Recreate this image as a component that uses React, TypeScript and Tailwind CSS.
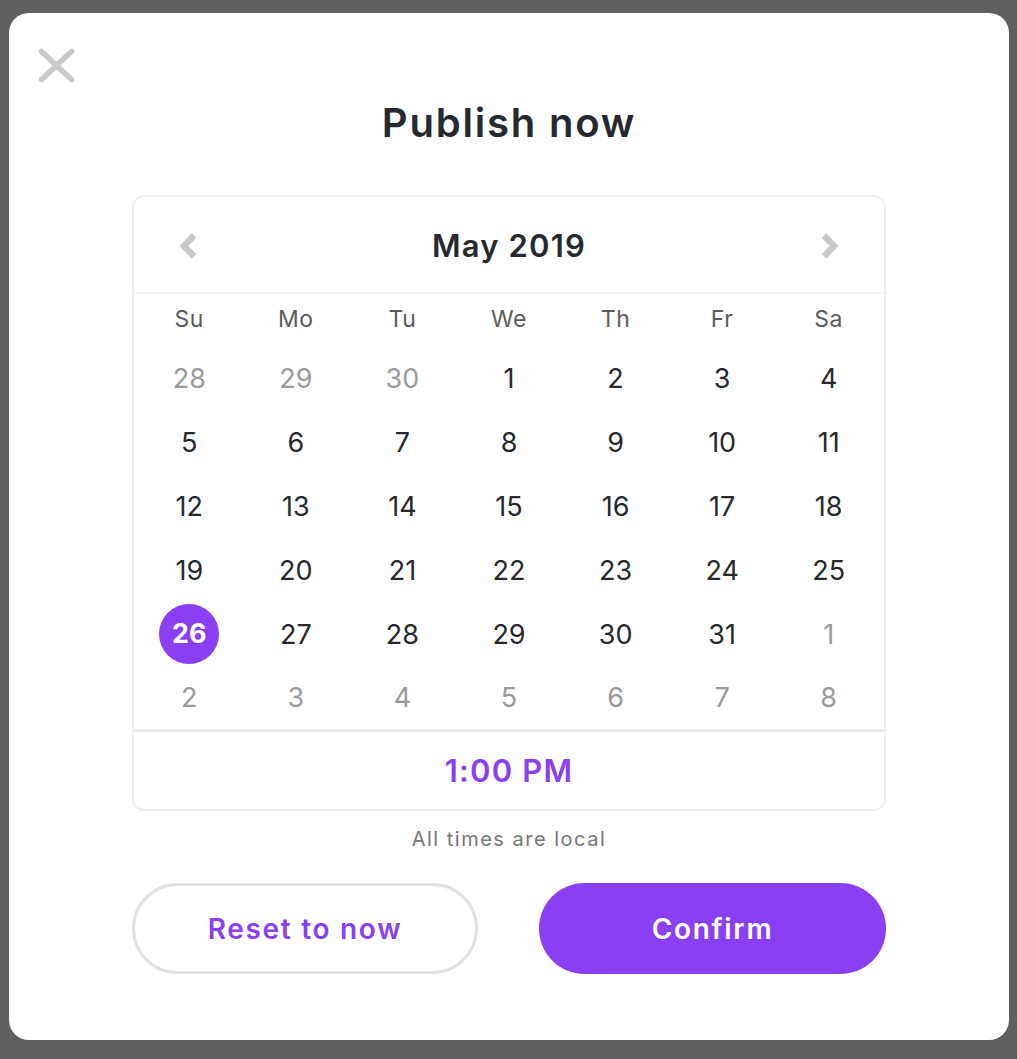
import React from "react";

const FONT = { fontFamily: "Inter, 'Open Sans', sans-serif" };

type Cell = { d: number; muted?: boolean; selected?: boolean };

const rows: Cell[][] = [
  [{ d: 28, muted: true }, { d: 29, muted: true }, { d: 30, muted: true }, { d: 1 }, { d: 2 }, { d: 3 }, { d: 4 }],
  [{ d: 5 }, { d: 6 }, { d: 7 }, { d: 8 }, { d: 9 }, { d: 10 }, { d: 11 }],
  [{ d: 12 }, { d: 13 }, { d: 14 }, { d: 15 }, { d: 16 }, { d: 17 }, { d: 18 }],
  [{ d: 19 }, { d: 20 }, { d: 21 }, { d: 22 }, { d: 23 }, { d: 24 }, { d: 25 }],
  [{ d: 26, selected: true }, { d: 27 }, { d: 28 }, { d: 29 }, { d: 30 }, { d: 31 }, { d: 1, muted: true }],
  [2, 3, 4, 5, 6, 7, 8].map((d) => ({ d, muted: true })),
];

const weekdays = ["Su", "Mo", "Tu", "We", "Th", "Fr", "Sa"];

function Chevron({ dir }: { dir: "left" | "right" }) {
  return (
    <svg width="20" height="26" viewBox="0 0 20 26" fill="none">
      <path
        d={dir === "left" ? "M16 2.5 L6 13 L16 23.5" : "M4 2.5 L14 13 L4 23.5"}
        stroke="#c9c9c9"
        strokeWidth="6.5"
        strokeLinejoin="miter"
      />
    </svg>
  );
}

export default function App() {
  return (
    <div className="w-[1017px] h-[1059px] bg-[#5f5f5f] pt-[13px] pl-[9px]" style={FONT}>
      <div className="relative w-[1000px] h-[1027px] bg-white rounded-[20px] flex flex-col items-center">
        <button className="absolute left-[28px] top-[34px]">
          <svg width="39" height="37" viewBox="0 0 39 37" fill="none">
            <path d="M4.5 4.5 L34.5 32.5 M34.5 4.5 L4.5 32.5" stroke="#c9c9c9" strokeWidth="5.5" strokeLinecap="round" />
          </svg>
        </button>

        <h1 className="mt-[86px] h-[48px] leading-[48px] text-[40px] font-semibold text-[#252a30] tracking-[1.8px]">
          Publish now
        </h1>

        <div className="mt-[48px] w-[754px] border-2 border-[#f0f0f0] rounded-[12px] flex flex-col">
          <div className="h-[97px] pt-[3px] flex items-center justify-between px-[44px] border-b-2 border-[#f4f4f4]">
            <Chevron dir="left" />
            <span className="text-[31px] font-semibold text-[#252a30] tracking-[1.2px]">May 2019</span>
            <Chevron dir="right" />
          </div>

          <div className="grid grid-cols-7 h-[50px] items-center px-[2px]">
            {weekdays.map((w) => (
              <span key={w} className="text-center text-[23px] text-[#5b5b5b] tracking-[0.5px]">
                {w}
              </span>
            ))}
          </div>

          <div className="grid grid-cols-7 grid-rows-[repeat(5,64px)_62px] pt-[3px] px-[2px]">
            {rows.flat().map((c, i) => (
              <div key={i} className="flex items-center justify-center">
                {c.selected ? (
                  <span className="w-[60px] h-[60px] -mt-[2px] rounded-full bg-[#8a3ff2] text-white font-bold text-[27px] flex items-center justify-center">
                    {c.d}
                  </span>
                ) : (
                  <span className={`text-[27px] ${c.muted ? "text-[#9a9a9a]" : "text-[#25292e]"}`}>{c.d}</span>
                )}
              </div>
            ))}
          </div>

          <div className="h-[80px] pt-[1px] border-t-[3px] border-[#ececec] flex items-center justify-center">
            <span className="text-[31px] font-semibold text-[#8a3ff2] tracking-[1.2px]">1:00 PM</span>
          </div>
        </div>

        <p className="mt-[16px] h-[24px] leading-[24px] text-[20px] text-[#777777] tracking-[1.5px]">All times are local</p>

        <div className="mt-[32px] w-[754px] flex justify-between">
          <button className="w-[346px] h-[91px] rounded-full border-[3px] border-[#e2e2e2] bg-white text-[28px] font-semibold text-[#8a3ff2] tracking-[1.7px]">
            Reset to now
          </button>
          <button className="w-[347px] h-[91px] rounded-full bg-[#8a3ff2] text-[28px] font-semibold text-white tracking-[1.7px]">
            Confirm
          </button>
        </div>
      </div>
    </div>
  );
}
